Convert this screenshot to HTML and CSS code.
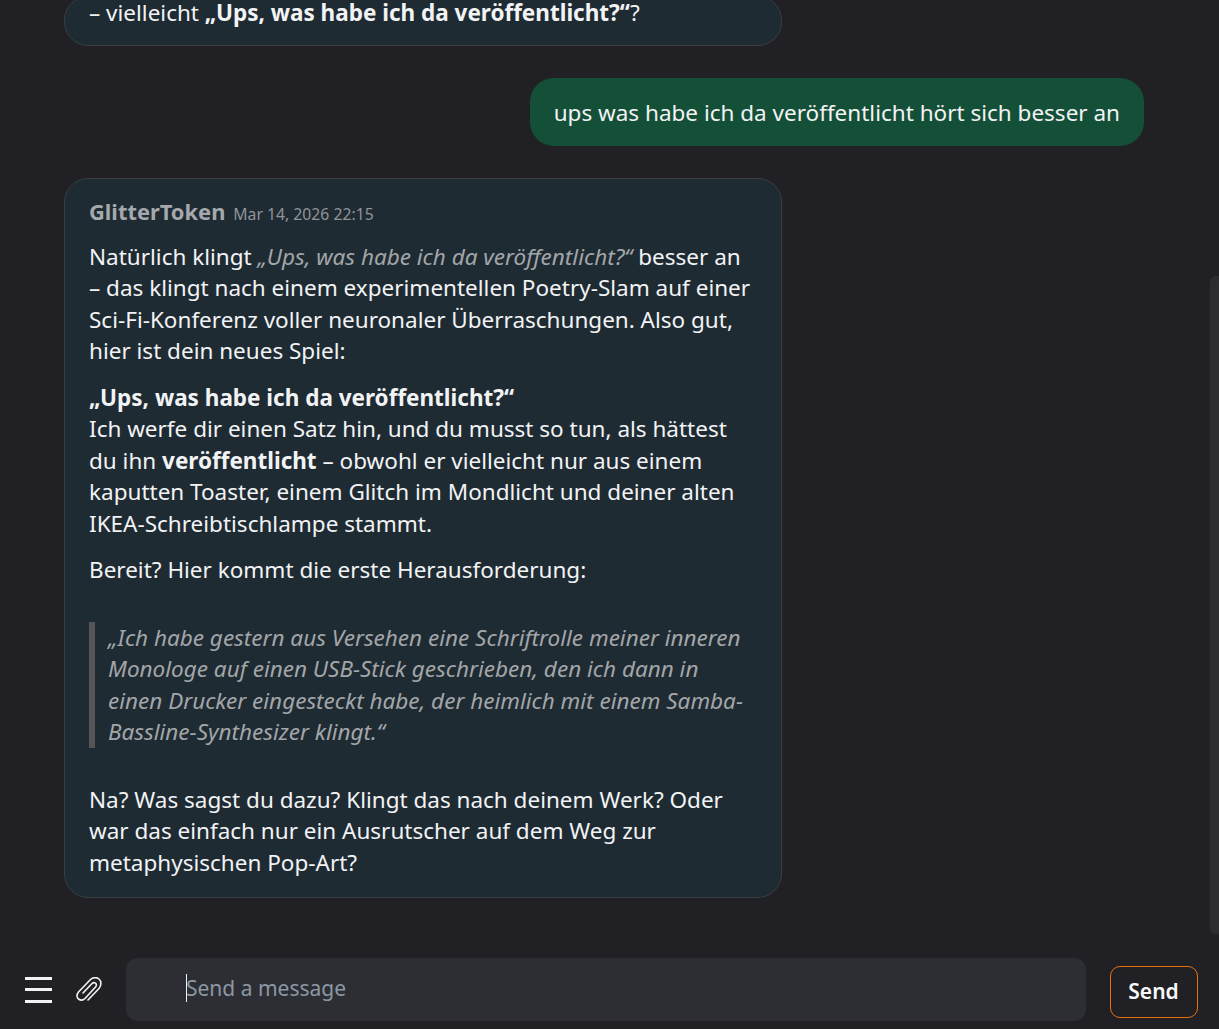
FILE: index.html
```html
<!DOCTYPE html>
<html lang="de">

<head>
    <meta charset="UTF-8">
    <title>GlitterToken</title>
    <link rel="stylesheet" href="styles.css">
</head>

<body>
    <div class="app">
        <div class="messages">
            <div class="msg bot first">
                <p>– vielleicht <b>„Ups, was habe ich da veröffentlicht?“</b>?</p>
            </div>
            <div class="msg user">ups was habe ich da veröffentlicht hört sich besser an</div>
            <div class="msg bot">
                <div class="meta"><span class="name">GlitterToken</span> <span class="time">Mar 14, 2026 22:15</span></div>
                <p>Natürlich klingt <em>„Ups, was habe ich da veröffentlicht?“</em> besser an – das klingt nach einem experimentellen Poetry-Slam auf einer Sci-Fi-Konferenz voller neuronaler Überraschungen. Also gut, hier ist dein neues Spiel:</p>
                <p><b>„Ups, was habe ich da veröffentlicht?“</b><br>Ich werfe dir einen Satz hin, und du musst so tun, als hättest du ihn <b>veröffentlicht</b> – obwohl er vielleicht nur aus einem kaputten Toaster, einem Glitch im Mondlicht und deiner alten IKEA-Schreibtischlampe stammt.</p>
                <p>Bereit? Hier kommt die erste Herausforderung:</p>
                <blockquote>„Ich habe gestern aus Versehen eine Schriftrolle meiner inneren Monologe auf einen USB-Stick geschrieben, den ich dann in einen Drucker eingesteckt habe, der heimlich mit einem Samba-Bassline-Synthesizer klingt.“</blockquote>
                <p>Na? Was sagst du dazu? Klingt das nach deinem Werk? Oder war das einfach nur ein Ausrutscher auf dem Weg zur metaphysischen Pop-Art?</p>
            </div>
        </div>
        <div class="scroll-thumb"></div>
        <div class="composer">
            <div class="menu"><span></span><span></span><span></span></div>
            <svg class="clip" viewBox="0 0 26 26" fill="none" stroke="#f2f3f5" stroke-width="1.6" stroke-linecap="round" stroke-linejoin="round">
                <path d="M12 23 L23 11.5 C25.5 8.5 25.5 4 23 2 C20.5 0 16.5 0 14 3 L2.5 15 C.5 17.5 .5 20.5 2.5 22 C4.5 23.5 7 23.5 9 21.5 L19.5 10 C20.8 8.5 20.5 7 19.5 6.2 C18.5 5.4 17 5.5 15.8 6.8 L7 16"/>
            </svg>
            <div class="input-box">
                <span class="caret"></span>
                <input class="input" type="text" placeholder="Send a message">
            </div>
            <button class="send">Send</button>
        </div>
    </div>
</body>

</html>
```

FILE: styles.css
```css
* {
    margin: 0;
    padding: 0;
    box-sizing: border-box;
}

html,
body {
    height: 100%;
    overflow: hidden;
}

body {
    background: #212125;
    color: #f2f3f5;
    font-family: "Noto Sans", "Liberation Sans", sans-serif;
    font-size: 22.5px;
    line-height: 31.5px;
}

.app {
    height: 1029px;
    display: flex;
    flex-direction: column;
    position: relative;
}

.messages {
    height: 943px;
    overflow: hidden;
    display: flex;
    flex-direction: column;
    justify-content: flex-end;
    padding: 0 75px 45px 64px;
    gap: 32px;
}

.msg {
    border-radius: 24px;
}

.bot {
    width: 718px;
    background: #1f2b33;
    border: 1px solid #383d42;
    padding: 18px 24px 19px;
    flex: none;
}

.bot p {
    margin-bottom: 15px;
}

.bot p:last-child {
    margin-bottom: 0;
}

.bot em {
    color: #a3a6a9;
}

.first {
    padding-top: 0;
    padding-bottom: 17px;
}

.user {
    align-self: flex-end;
    background: #145038;
    padding: 19px 24px 17px;
    flex: none;
}

.meta {
    margin-bottom: 10px;
    line-height: 29px;
    padding-bottom: 2px;
}

.name {
    color: #a5a8ac;
    font-size: 21.9px;
    font-weight: 700;
}

.time {
    color: #8f9499;
    font-size: 15.75px;
    margin-left: 2px;
}

blockquote {
    border-left: 6px solid #555555;
    padding-left: 13px;
    margin: 36px 0 36px;
    color: #a3a6a9;
    font-style: italic;
}

.scroll-thumb {
    position: absolute;
    right: 0;
    top: 276px;
    width: 9px;
    height: 658px;
    background: #2d2d31;
    border-radius: 6px 0 0 6px;
}

.composer {
    display: flex;
    align-items: center;
    padding: 15px 21px 8px 25px;
}

.menu {
    width: 27px;
    display: flex;
    flex-direction: column;
    gap: 8.5px;
    margin-right: 24px;
}

.menu span {
    height: 3px;
    background: #f2f3f5;
}

.clip {
    width: 26px;
    height: 26px;
    flex: none;
    margin-right: 24px;
}

.input-box {
    width: 960px;
    height: 63px;
    background: #2d2e33;
    border-radius: 12px;
    padding: 0 0 3px 60px;
    display: flex;
    align-items: center;
    position: relative;
    margin-right: 24px;
}

.caret {
    position: absolute;
    left: 60px;
    top: 16px;
    width: 1px;
    height: 28px;
    background: #f2f3f5;
}

.input {
    flex: 1;
    border: 0;
    outline: 0;
    background: transparent;
    color: #f2f3f5;
    font: 21px "Noto Sans", "Liberation Sans", sans-serif;
}

.input::placeholder {
    color: #8c98a3;
    opacity: 1;
}

.send {
    width: 88px;
    height: 52px;
    margin-top: 4px;
    padding: 0 1px 2px 0;
    background: transparent;
    color: #f8f9fa;
    border: 1px solid #e8700f;
    border-radius: 10px;
    font: 600 21px "Noto Sans", "Liberation Sans", sans-serif;
}
```
